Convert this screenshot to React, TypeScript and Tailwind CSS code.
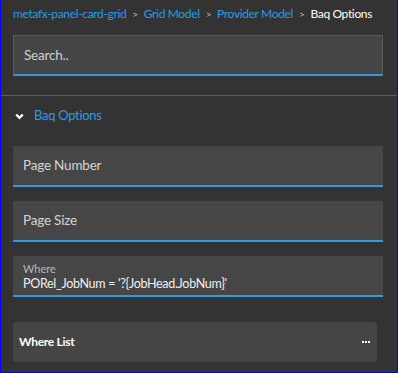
const Field = ({ label }: { label: string }) => {
  return (
    <div className="w-[370px] h-[41px] bg-[#464646] border-b-2 border-[#2b9be3] flex items-center pl-[10px] text-[13.5px] tracking-[-0.2px] text-[#d4d4d4]">
      {label}
    </div>
  );
};

const App = () => {
  return (
    <div
      className="w-[398px] h-[373px] bg-[#333333] border-x border-b border-[#0000ff] overflow-hidden"
      style={{ fontFamily: "Lato, 'Noto Sans', sans-serif" }}
    >
      {/* breadcrumb */}
      <div className="flex items-center h-[20px] mt-[4px] pl-[12px] text-[12px] tracking-[-0.35px] whitespace-nowrap">
        <span className="text-[#2b9be3]">metafx-panel-card-grid</span>
        <span className="text-[#bdbdbd] mx-[6px] text-[10px]">&gt;</span>
        <span className="text-[#2b9be3]">Grid Model</span>
        <span className="text-[#bdbdbd] mx-[6px] text-[10px]">&gt;</span>
        <span className="text-[#2b9be3]">Provider Model</span>
        <span className="text-[#bdbdbd] mx-[6px] text-[10px]">&gt;</span>
        <span className="text-white">Baq Options</span>
      </div>

      {/* search */}
      <div className="px-[12px] mt-[11px]">
        <div className="w-[370px] h-[41px] bg-[#454545] border border-[#5c5c5c] border-b-2 border-b-[#2b9be3] flex items-center pl-[10px] text-[13.5px] tracking-[-0.2px] text-[#cfcfcf]">
          Search..
        </div>
      </div>

      <div className="h-px bg-[#5a5a5a] mt-[19px]" />

      {/* section */}
      <div className="flex items-center h-[20px] mt-[10px] pl-[14px] text-[13px] tracking-[-0.3px] text-[#2b9be3]">
        <svg width="9" height="7" viewBox="0 0 9 7" className="mr-[10px]">
          <path d="M1.2 1.5 L4.5 4.8 L7.8 1.5" fill="none" stroke="#ffffff" strokeWidth="2.4" />
        </svg>
        Baq Options
      </div>

      <div className="px-[12px] mt-[20px] flex flex-col gap-[14px]">
        <Field label="Page Number" />
        <Field label="Page Size" />
        <div className="w-[370px] h-[41px] bg-[#464646] border-b-2 border-[#2b9be3] flex flex-col justify-center pl-[10px] pt-[3px] leading-none">
          <span className="text-[11px] text-[#b8b8b8] mb-[4px]">Where</span>
          <span className="text-[12.5px] tracking-[-0.3px] text-[#f0f0f0]">PORel_JobNum = '?{"{"}JobHead.JobNum{"}"}'</span>
        </div>
      </div>

      {/* where list */}
      <div className="px-[12px] mt-[25px]">
        <div className="w-[364px] h-[40px] bg-[#454545] rounded-[3px] flex items-center justify-between pl-[6px] pr-[7px]">
          <span className="text-[12px] tracking-[-0.3px] font-bold text-white">Where List</span>
          <span className="flex gap-px">
            <span className="w-[2px] h-[2px] bg-white" />
            <span className="w-[2px] h-[2px] bg-white" />
            <span className="w-[2px] h-[2px] bg-white" />
          </span>
        </div>
      </div>
    </div>
  );
};

export default App;
